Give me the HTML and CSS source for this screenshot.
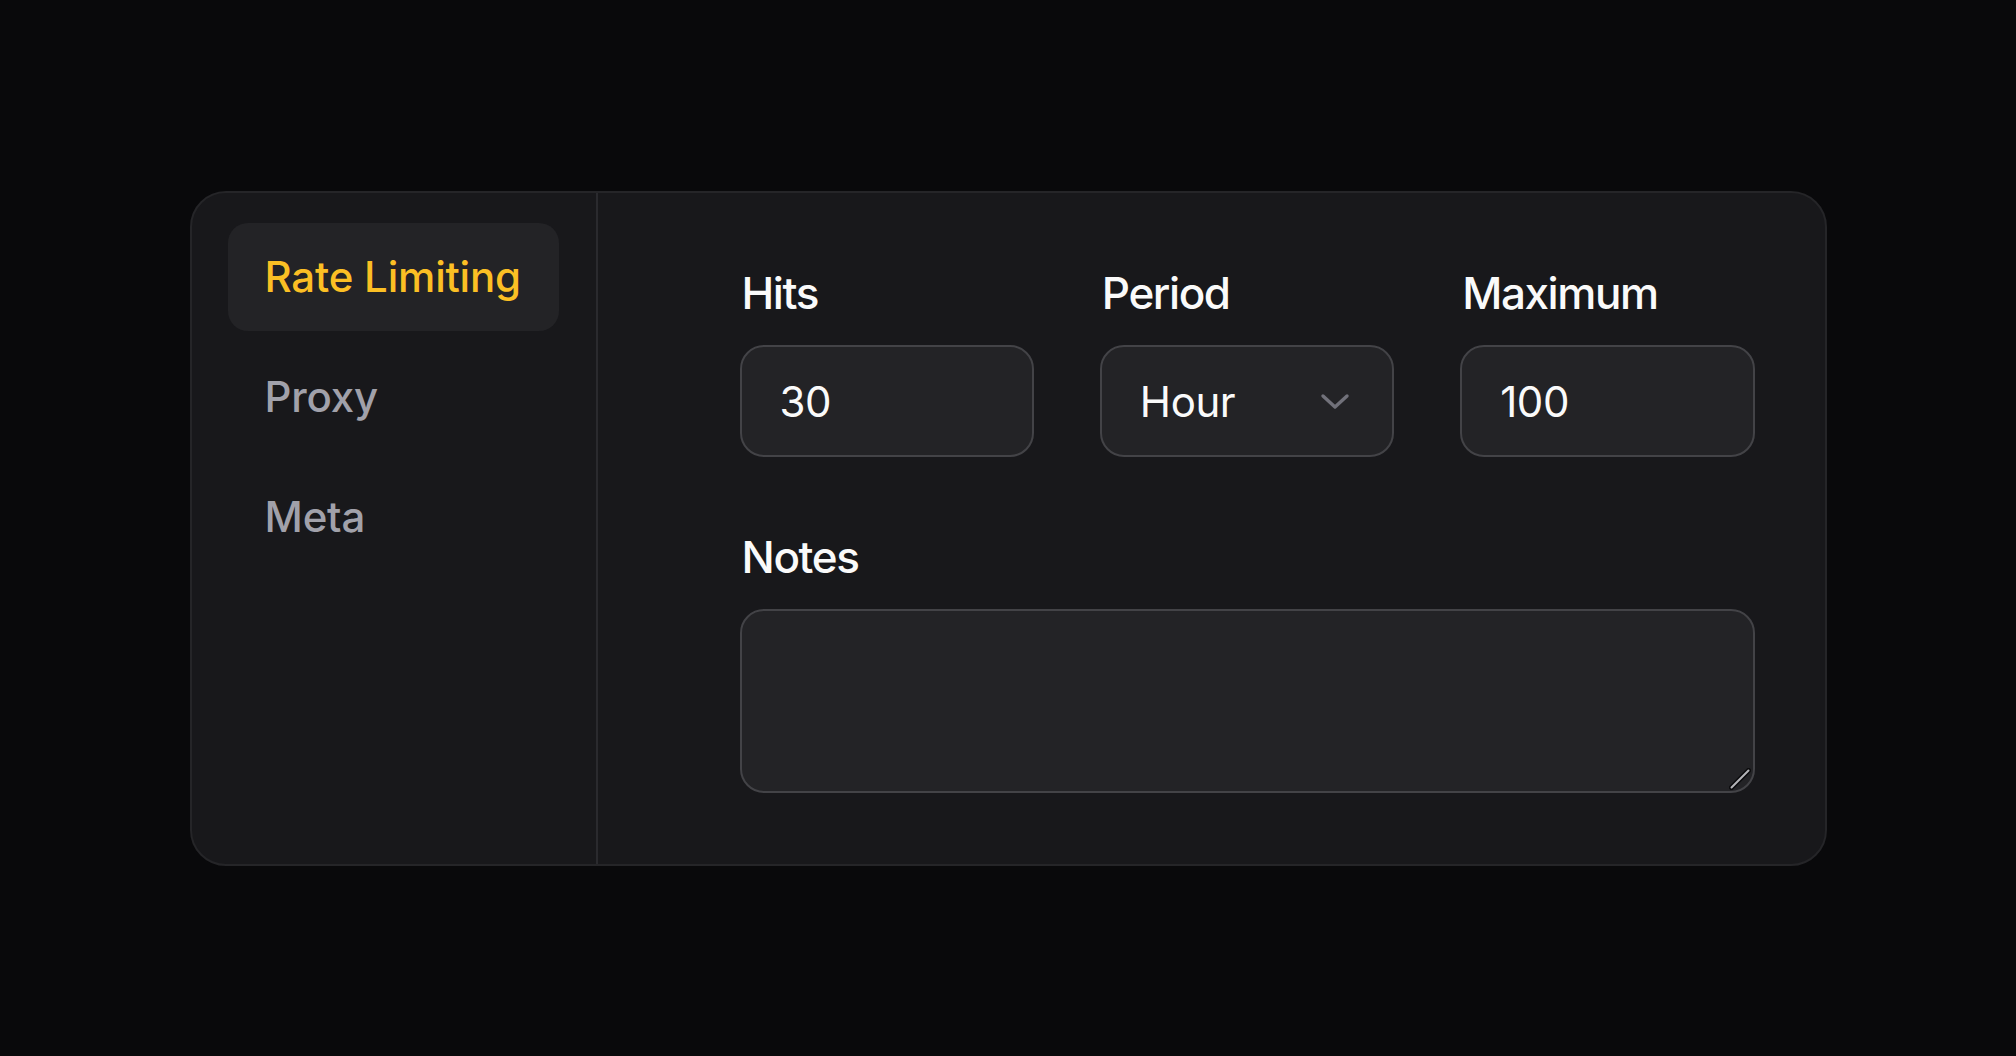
FILE: index.html
```html
<!DOCTYPE html>
<html lang="en">
<head>
<meta charset="utf-8">
<title>Settings</title>
<link rel="stylesheet" href="styles.css">
</head>
<body>
  <div class="card">
    <nav class="sidebar">
      <a class="nav-item active">Rate Limiting</a>
      <a class="nav-item">Proxy</a>
      <a class="nav-item">Meta</a>
    </nav>
    <main class="main">
      <div class="row">
        <div class="field">
          <label class="label">Hits</label>
          <div class="input">30</div>
        </div>
        <div class="field">
          <label class="label">Period</label>
          <div class="input select">
            <span>Hour</span>
            <svg class="chev" width="30" height="18" viewBox="0 0 30 18"><path d="M3 3 L15 14 L27 3" fill="none" stroke="#71717a" stroke-width="3.4" stroke-linecap="round" stroke-linejoin="round"/></svg>
          </div>
        </div>
        <div class="field">
          <label class="label">Maximum</label>
          <div class="input">100</div>
        </div>
      </div>
      <div class="field notes">
        <label class="label">Notes</label>
        <div class="textarea">
          <svg class="grip" width="22" height="22" viewBox="0 0 22 22"><path d="M2.5 19.5 L19.5 2.5" stroke="#0b0b0d" stroke-width="5" stroke-linecap="round"/><path d="M2.5 19.5 L19.5 2.5" stroke="#b4b4b8" stroke-width="2" stroke-linecap="round"/></svg>
        </div>
      </div>
    </main>
  </div>
</body>
</html>
```

FILE: styles.css
```css
* { box-sizing: border-box; }
html, body { margin: 0; padding: 0; }
body {
  background: #09090b;
  height: 100vh;
  display: flex;
  align-items: center;
  justify-content: center;
  font-family: Inter, "Noto Sans", sans-serif;
  color: #fafafa;
}
.card {
  width: 1637px;
  height: 675px;
  background: #18181b;
  border: 2px solid #252528;
  border-radius: 36px;
  display: flex;
}
.sidebar {
  width: 406px;
  flex: none;
  border-right: 2px solid #2a2a2e;
  padding: 30px 37px 30px 36px;
  display: flex;
  flex-direction: column;
  gap: 12px;
}
.nav-item {
  height: 108px;
  display: flex;
  align-items: center;
  padding: 0 37px;
  border-radius: 20px;
  font-size: 42px;
  font-weight: 500;
  letter-spacing: -0.2px;
  white-space: nowrap;
  color: #a1a1aa;
}
.nav-item.active {
  background: #232326;
  color: #fbbf24;
}
.main {
  flex: 1;
  padding: 69px 70px 70px 142px;
}
.row {
  display: grid;
  grid-template-columns: repeat(3, 1fr);
  column-gap: 66px;
}
.field { display: flex; flex-direction: column; }
.label {
  font-size: 44px;
  line-height: 62px;
  font-weight: 500;
  letter-spacing: -1.4px;
  color: #fafafa;
  margin-bottom: 21px;
  padding-left: 2px;
}
.input {
  height: 112px;
  border: 2px solid #434347;
  border-radius: 24px;
  background: #232326;
  padding: 2px 38px 0;
  display: flex;
  align-items: center;
  font-size: 42px;
  letter-spacing: -0.4px;
  color: #fafafa;
}
.select { justify-content: space-between; padding-right: 42px; }
.chev { display: block; }
.notes { margin-top: 69px; }
.textarea {
  height: 184px;
  border: 2px solid #434347;
  border-radius: 24px;
  background: #232326;
  position: relative;
}
.grip {
  position: absolute;
  right: 2px;
  bottom: 1px;
}
```
